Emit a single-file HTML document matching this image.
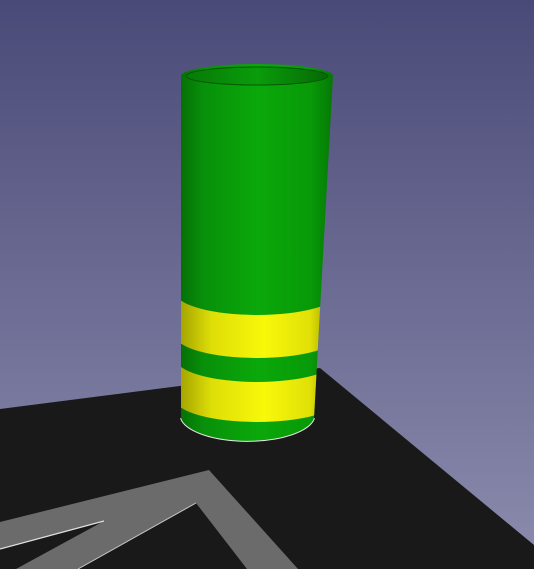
<!DOCTYPE html>
<html><head><style>html,body{margin:0;padding:0;width:534px;height:569px;overflow:hidden}</style></head>
<body>
<svg width="534" height="569" viewBox="0 0 534 569" xmlns="http://www.w3.org/2000/svg">
<defs>
<linearGradient id="bg" x1="0" y1="0" x2="0" y2="1">
<stop offset="0" stop-color="#4a4a78"/><stop offset="1" stop-color="#8c8cae"/>
</linearGradient>
<linearGradient id="gr" x1="181" y1="0" x2="333" y2="0" gradientUnits="userSpaceOnUse">
<stop offset="0" stop-color="#067006"/><stop offset="0.15" stop-color="#08900a"/><stop offset="0.5" stop-color="#0aa80a"/><stop offset="0.85" stop-color="#089a08"/><stop offset="1" stop-color="#067806"/>
</linearGradient>
<linearGradient id="ye" x1="181" y1="0" x2="333" y2="0" gradientUnits="userSpaceOnUse">
<stop offset="0" stop-color="#a5a500"/><stop offset="0.2" stop-color="#dede08"/><stop offset="0.55" stop-color="#f8f80a"/><stop offset="0.85" stop-color="#e0e008"/><stop offset="1" stop-color="#9a9a00"/>
</linearGradient>
<linearGradient id="in" x1="187" y1="0" x2="327" y2="0" gradientUnits="userSpaceOnUse">
<stop offset="0" stop-color="#077a07"/><stop offset="0.5" stop-color="#0a9c0a"/><stop offset="1" stop-color="#066a06"/>
</linearGradient>
<clipPath id="cyl"><path d="M181,76 L181,418 A67,26 0 0 0 314,418 L333,76 Z"/></clipPath>
</defs>
<rect width="534" height="569" fill="url(#bg)"/>
<polygon points="0,409 320,368 534,545 534,569 0,569" fill="#191919"/>
<polygon points="0,522 209,470 298,569 0,569" fill="#6b6b6b"/>
<polygon points="196,503 247,569 78,569" fill="#191919"/>
<polygon points="104,521 16,569 0,569 0,549" fill="#191919"/>
<line x1="196" y1="503" x2="78" y2="569" stroke="#c8c8c8" stroke-width="1"/>
<line x1="104" y1="521" x2="0" y2="549" stroke="#e0e0e0" stroke-width="1.2"/>
<path d="M181,418 A67,26 0 0 0 314,418" fill="none" stroke="#e8e8e8" stroke-width="2"/>
<g clip-path="url(#cyl)">
<rect x="170" y="60" width="180" height="420" fill="url(#gr)"/>
<path d="M175,292 A82,23 0 0 0 339,292 L339,335 A82,23 0 0 1 175,335 Z" fill="url(#ye)"/>
<path d="M175,358 A82,24 0 0 0 339,358 L339,399 A82,23 0 0 1 175,399 Z" fill="url(#ye)"/>
</g>
<ellipse cx="257" cy="76" rx="76" ry="12" fill="url(#gr)"/>
<ellipse cx="257" cy="76" rx="71" ry="9" fill="url(#in)" stroke="#055805" stroke-width="1"/>
</svg>
</body></html>
